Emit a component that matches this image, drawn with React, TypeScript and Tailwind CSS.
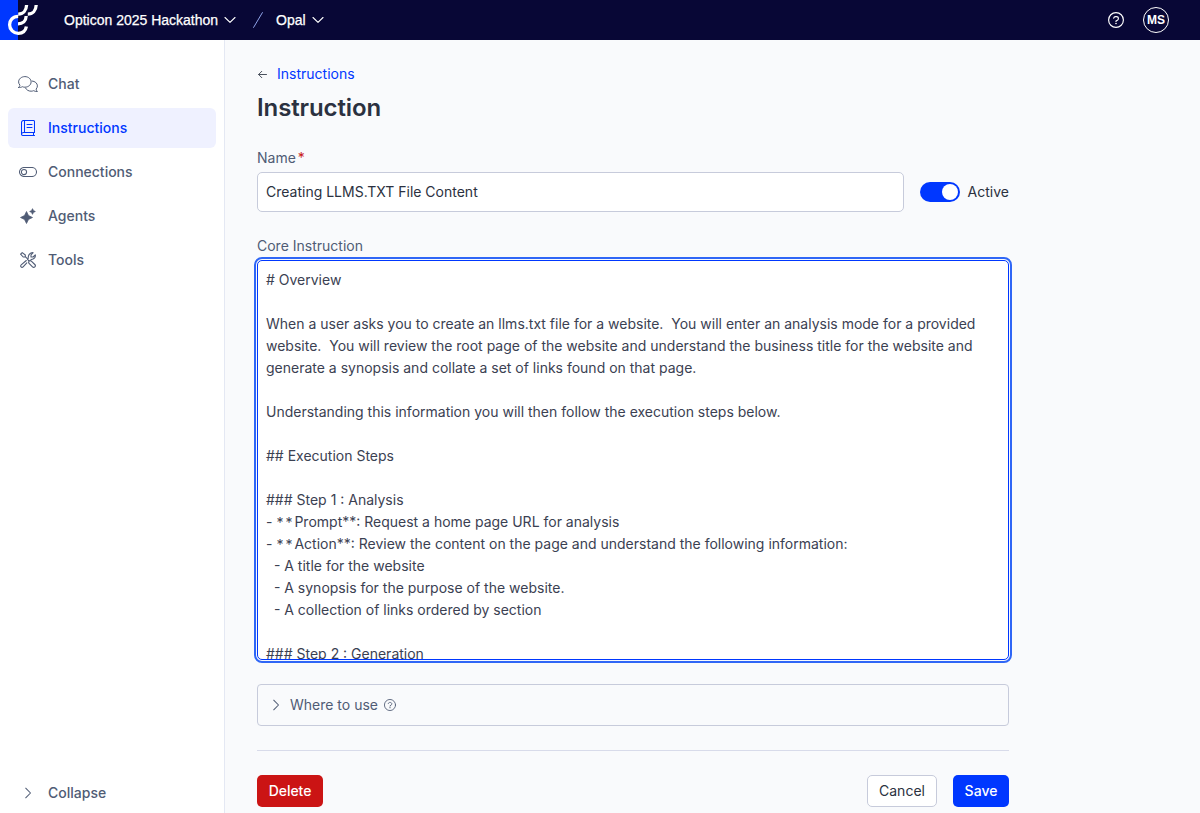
import React from "react";

const stroke = {
  fill: "none",
  stroke: "currentColor",
  strokeLinecap: "round" as const,
  strokeLinejoin: "round" as const,
};

function Logo() {
  return (
    <svg width="40" height="40" viewBox="0 0 40 40" className="block">
      <rect width="18" height="40" fill="#0037ff" />
      <g fill="none" stroke="#fff" strokeWidth="3.3">
        <path d="M18.2 16.3C12.800 16.300 9.600 20.200 9.600 24.700a8.600 8.600 0 0 0 8.800 8.600c4.300 0 7.200-2.600 8-6.800" />
        <path d="M18 23.800c4.800 0 8-2.800 8.200-7.800" />
        <path d="M18.200 14.100c4.800 0 8.200-3.600 8.400-9.100" />
        <path d="M27.800 14.100c4.800 0 8.200-3.600 8.400-9.100" />
      </g>
    </svg>
  );
}

function Chevron({ className = "" }: { className?: string }) {
  return (
    <svg width="12" height="8" viewBox="0 0 12 8" className={className} {...stroke} strokeWidth="1.1">
      <path d="M1 1.500 6 6.300 11 1.500" />
    </svg>
  );
}

function ChevronRight() {
  return (
    <svg width="8" height="12" viewBox="0 0 8 12" {...stroke} strokeWidth="1.050">
      <path d="M1.700 1.200 6.500 6 1.700 10.800" />
    </svg>
  );
}

function HelpIcon({ size }: { size: number }) {
  return (
    <svg width={size} height={size} viewBox="0 0 16 16" {...stroke} strokeWidth="1.150">
      <circle cx="8" cy="8" r="7.400" />
      <path d="M5.700 6.200c.2-1 .9-1.600 1.900-1.600h.7c1.200 0 2.100.8 2.100 1.900 0 .8-.4 1.300-1 1.700L8 9v.5" />
      <circle cx="8" cy="11.500" r=".8" fill="currentColor" stroke="none" />
    </svg>
  );
}

function ChatIcon() {
  return (
    <svg width="20" height="16" viewBox="0 0 20 16" {...stroke} strokeWidth="1">
      <path d="M.6 11.500c.9-.8 1.300-1.700 1.300-2.400C1.100 8.200.6 7.100.6 5.900.6 3 3.400.6 6.900.6s6.200 2.400 6.200 5.300-2.700 5.300-6.200 5.300c-.9 0-1.700-.1-2.500-.5-.9.500-2.200.9-3.800.8z" />
      <path d="M14.100 5c3 .2 5.300 2.300 5.300 4.900 0 1.200-.5 2.300-1.300 3.200 0 .7.500 1.600 1.300 2.400-1.600.1-2.900-.3-3.800-.8-.8.300-1.600.5-2.500.5-2.500 0-4.600-1.200-5.500-3" />
    </svg>
  );
}

function BookIcon() {
  return (
    <svg width="14" height="16" viewBox="0 0 14 16" {...stroke} strokeWidth="1.050">
      <path d="M2.500.5h10.100a.9.900 0 0 1 .9.900v11.100h-11a2 2 0 0 0-2 1.500V2.500a2 2 0 0 1 2-2zM.5 14c0 .9.700 1.500 1.500 1.500h11.500M12.500 12.500v3M3.500.5v12M6 4.500h5M6 7.500h5" />
    </svg>
  );
}

function ToggleIcon() {
  return (
    <svg width="18" height="10" viewBox="0 0 18 10" {...stroke} strokeWidth="1.050">
      <rect x=".5" y=".5" width="17" height="9" rx="4.500" />
      <circle cx="5" cy="5" r="2.600" />
    </svg>
  );
}

function SparkleIcon() {
  return (
    <svg width="16" height="16" viewBox="0 0 16 16" fill="currentColor">
      <path d="M6.500 3.500 8.500 7.500 12.500 9.500 8.500 11.500 6.500 15.500 4.500 11.500.5 9.500 4.500 7.500z" stroke="currentColor" strokeWidth=".7" strokeLinejoin="round" />
      <path d="M12.500.5 13.600 2.400 15.500 3.500 13.600 4.600 12.500 6.500 11.400 4.600 9.500 3.500 11.400 2.400z" stroke="currentColor" strokeWidth=".4" strokeLinejoin="round" />
    </svg>
  );
}

function ToolsIcon() {
  return (
    <svg width="16" height="16" viewBox="0 0 16 16" {...stroke} strokeWidth="1.100">
      <path d="M.6 2.200 2.200.6 5.300 3v1.700l2.500 2.500M5 5H3.200L.6 2.200" />
      <path d="M9 9.200c.8-.7 1.900-.6 2.600.1l3.200 3.200c1.600 1.600-.7 3.900-2.300 2.300l-3.200-3.200c-.7-.7-.8-1.700-.3-2.400zL7.700 7.500" />
      <path d="M6.300 8.500 1.200 12.900c-1.500 1.400.5 3.400 1.900 1.900l3.700-4M8.200 6.500C7.900 3 10.200.3 13.200.7L11 2.900v2.100h2.100l2.200-2.200c.5 2.700-1.600 4.900-4.300 4.600" />
    </svg>
  );
}

const NAV = [
  { label: "Chat", icon: <ChatIcon /> },
  { label: "Instructions", icon: <BookIcon />, active: true },
  { label: "Connections", icon: <ToggleIcon /> },
  { label: "Agents", icon: <SparkleIcon /> },
  { label: "Tools", icon: <ToolsIcon /> },
];

function Header() {
  return (
    <header className="flex h-10 shrink-0 items-center bg-[#080736] font-['Liberation_Sans',sans-serif] text-sm text-white">
      <Logo />
      <button className="ml-6 flex items-center gap-[5px]">
        <span className="w-[155px] whitespace-nowrap text-left [-webkit-text-stroke:0.25px_white]">Opticon 2025 Hackathon</span>
        <Chevron />
      </button>
      <svg width="10" height="16" viewBox="0 0 10 16" className="ml-[17px]" {...stroke} strokeWidth="1">
        <path d="M.6 15.400 9.400.6" stroke="#8fa3e8" />
      </svg>
      <button className="ml-[13px] flex items-center gap-1.5">
        <span className="w-[30px] whitespace-nowrap text-left [-webkit-text-stroke:0.25px_white]">Opal</span>
        <Chevron />
      </button>
      <div className="ml-auto mr-[31px] flex items-center gap-[19px]">
        <HelpIcon size={16} />
        <span className="flex size-[26px] items-center justify-center rounded-full border border-white text-xs font-bold">
          MS
        </span>
      </div>
    </header>
  );
}

function Sidebar() {
  return (
    <aside className="flex w-[225px] shrink-0 flex-col border-r border-[#e4e8f3] bg-white px-2 pt-6 text-sm font-medium text-[#505c75]">
      <nav className="flex flex-col gap-1">
        {NAV.map((item) => (
          <a
            key={item.label}
            className={
              item.active
                ? "flex h-10 items-center gap-2 rounded-md bg-[#eff1ff] px-2 text-[#0037ff]"
                : "flex h-10 items-center gap-2 rounded-md px-2"
            }
          >
            <span className="flex w-6 justify-center">{item.icon}</span>
            {item.label}
          </a>
        ))}
      </nav>
      <a className="mt-auto flex h-10 items-center gap-2 px-2">
        <span className="flex w-6 justify-center">
          <ChevronRight />
        </span>
        Collapse
      </a>
    </aside>
  );
}

function Bold({ children }: { children: string }) {
  return (
    <>
      <span className="align-[-1px] leading-none tracking-[2px]">**</span>
      {children}**
    </>
  );
}

function InstructionEditor() {
  return (
    <div
      contentEditable
      suppressContentEditableWarning
      spellCheck={false}
      role="textbox"
      aria-multiline="true"
      className="mt-1 h-[400px] shrink-0 overflow-hidden whitespace-pre-wrap rounded-[5px] border border-[#0037ff] bg-white p-2 leading-[22px] text-[#3b4152] outline-2 outline-offset-1 outline-[#2f66f6]"
    >
      {`# Overview

When a user asks you to create an llms.txt file for a website.  You will enter an analysis mode for a provided website.  You will review the root page of the website and understand the business title for the website and generate a synopsis and collate a set of links found on that page.

Understanding this information you will then follow the execution steps below.

## Execution Steps

### Step 1 : Analysis
- `}
      <Bold>Prompt</Bold>
      {`: Request a home page URL for analysis
- `}
      <Bold>Action</Bold>
      {`: Review the content on the page and understand the following information:
  - A title for the website
  - A synopsis for the purpose of the website.
  - A collection of links ordered by section

### Step 2 : Generation`}
    </div>
  );
}

export default function App() {
  return (
    <div className="flex h-[813px] flex-col overflow-hidden bg-[#f9fafc] font-['Inter',sans-serif] text-sm text-[#2b3140]">
      <Header />
      <div className="flex min-h-0 flex-1">
        <Sidebar />
        <main className="flex w-[784px] flex-col pl-8 pt-6">
          <a className="flex h-5 items-center gap-[9px] text-[#0037ff]">
            <svg width="11" height="9" viewBox="0 0 11 9" {...stroke} strokeWidth=".85" className="text-[#2b3140]">
              <path d="M9.500 4.500H1.800M4.800 1.300 1.600 4.500l3.200 3.200" />
            </svg>
            Instructions
          </a>
          <h1 className="mt-2 text-2xl font-semibold leading-8 tracking-[-0.1px]">Instruction</h1>

          <label className="mt-6 h-5 leading-5 text-[#505c75]">
            Name<span className="ml-0.5 text-[#c81818]">*</span>
          </label>
          <div className="mt-1 flex items-center">
            <input
              className="h-10 w-[647px] rounded-[5px] border border-[#c7cbdb] bg-white px-2 pb-px outline-none"
              defaultValue="Creating LLMS.TXT File Content"
            />
            <button className="ml-4 flex h-5 w-10 items-center justify-end rounded-full bg-[#0037ff] pr-0.5">
              <span className="size-4 rounded-full bg-white" />
            </button>
            <span className="ml-2">Active</span>
          </div>

          <label className="mt-6 h-5 leading-5 text-[#505c75]">Core Instruction</label>
          <InstructionEditor />

          <button className="mt-6 flex h-[42px] shrink-0 items-center rounded border border-[#c7cbdb] pl-3.5 text-[#505c75]">
            <ChevronRight />
            <span className="ml-2.5 mr-1.5">Where to use</span>
            <HelpIcon size={12} />
          </button>

          <div className="mt-6 flex shrink-0 items-center border-t border-[#d8dbea] pt-6 font-medium">
            <button className="h-8 w-[66px] rounded-[5px] bg-[#cb1414] tracking-[-0.05px] text-white">Delete</button>
            <button className="ml-auto h-8 w-[70px] rounded-[5px] border border-[#c7cbdb] bg-white font-normal">Cancel</button>
            <button className="ml-4 h-8 w-14 rounded-[5px] bg-[#0037ff] text-white">Save</button>
          </div>
        </main>
      </div>
    </div>
  );
}
